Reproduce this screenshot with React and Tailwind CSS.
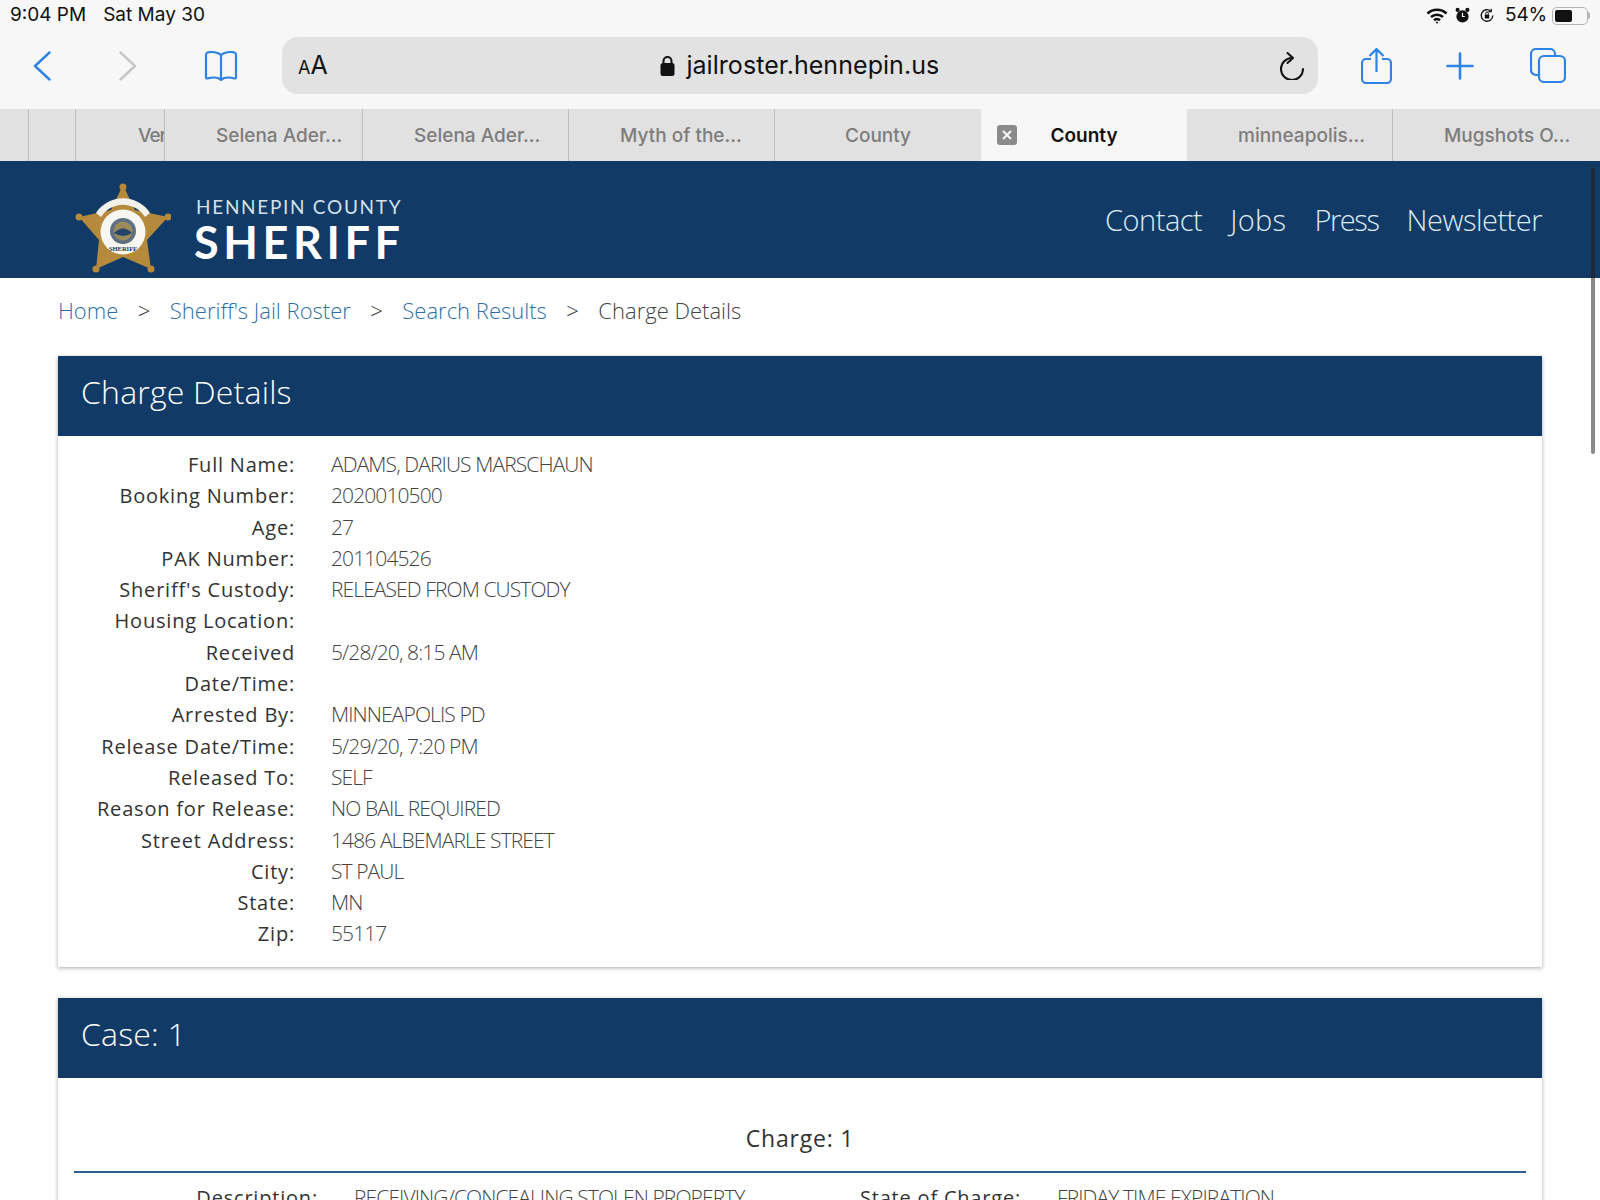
const tabs = [
  { label: 'Selena Ader...', w: 'w-[198px]', line: true },
  { label: 'Selena Ader...', w: 'w-[206px]', line: true },
  { label: 'Myth of the...', w: 'w-[206px]', line: true },
  { label: 'County', w: 'w-[206px]', center: true },
  { label: 'County', w: 'w-[206px]', center: true, active: true },
  { label: 'minneapolis...', w: 'w-[206px]', line: true },
  { label: 'Mugshots O...', w: 'flex-1' },
]

const details = [
  ['Full Name:', 'ADAMS, DARIUS MARSCHAUN'],
  ['Booking Number:', '2020010500'],
  ['Age:', '27'],
  ['PAK Number:', '201104526'],
  ["Sheriff's Custody:", 'RELEASED FROM CUSTODY'],
  ['Housing Location:', ''],
  ['Received\nDate/Time:', '5/28/20, 8:15 AM'],
  ['Arrested By:', 'MINNEAPOLIS PD'],
  ['Release Date/Time:', '5/29/20, 7:20 PM'],
  ['Released To:', 'SELF'],
  ['Reason for Release:', 'NO BAIL REQUIRED'],
  ['Street Address:', '1486 ALBEMARLE STREET'],
  ['City:', 'ST PAUL'],
  ['State:', 'MN'],
  ['Zip:', '55117'],
]

function Badge() {
  return (
    <svg width="96" height="96" viewBox="0 0 96 96" className="shrink-0">
      <path d="M48 5 60 30 93 37 72 60 76 89 48 77 21 89 24 60 4 37 36 30Z" fill="#b58a3c" />
      <circle cx="48" cy="7" r="3.5" fill="#b58a3c" />
      <circle cx="93" cy="37" r="3.5" fill="#b58a3c" />
      <circle cx="76" cy="89" r="3.500" fill="#b58a3c" />
      <circle cx="21" cy="89" r="3.500" fill="#b58a3c" />
      <circle cx="4" cy="37" r="3.500" fill="#b58a3c" />
      <path d="M21 33 A32 32 0 0 1 75 33 L70 37 A26 26 0 0 0 26 37Z" fill="#f3f1ea" />
      <circle cx="48" cy="52" r="22.500" fill="#f7f6f1" />
      <circle cx="48" cy="51" r="13" fill="#5d6f80" />
      <circle cx="48" cy="51" r="9.500" fill="#9a8a5c" />
      <path d="M39 53 Q48 44 57 53 Q48 59 39 53Z" fill="#23456b" />
      <text x="48" y="71" textAnchor="middle" fontSize="6.500" fontWeight="800" fill="#1d3557" fontFamily="'Liberation Serif', serif">SHERIFF</text>
    </svg>
  )
}

function StatusIcons() {
  return (
    <div className="flex items-center">
      {/* wifi */}
      <svg width="22" height="16" viewBox="0 0 22 16" fill="none" stroke="#111" strokeWidth="2.6">
        <path d="M1.5 5.5a14 14 0 0 1 19 0" />
        <path d="M5 9a9 9 0 0 1 12 0" />
        <path d="M8 12.2a4.4 4.4 0 0 1 6 0" />
        <circle cx="11" cy="14.5" r="1" fill="#111" stroke="none" />
      </svg>
      {/* alarm */}
      <svg className="ml-[7px]" width="15" height="17" viewBox="0 0 16 18">
        <circle cx="8" cy="10" r="6.5" fill="#111" />
        <circle cx="2.8" cy="3" r="2.2" fill="#111" />
        <circle cx="13.2" cy="3" r="2.2" fill="#111" />
        <path d="M8 6v4h2.5" stroke="#fff" strokeWidth="1.2" fill="none" />
      </svg>
      {/* rotation lock */}
      <svg className="ml-[9px]" width="16" height="17" viewBox="0 0 18 18" fill="none" stroke="#111" strokeWidth="1.5">
        <path d="M15.5 9a6.5 6.5 0 1 1-2-4.7" />
        <path d="M13.8 1.5v3.2h-3.2" strokeWidth="1.3" />
        <rect x="6.5" y="8" width="5" height="4.5" rx="0.8" fill="#111" stroke="none" />
        <path d="M7.5 8V6.5a1.5 1.5 0 0 1 3 0V8" strokeWidth="1.1" />
      </svg>
    </div>
  )
}

function Battery() {
  return (
    <div className="flex items-center">
      <div className="w-[36px] h-[18px] rounded-[5px] border border-[#b5b5b5] p-[2px]">
        <div className="w-[17px] h-full rounded-[2px] bg-[#111]" />
      </div>
      <div className="w-[2px] h-[7px] rounded-r bg-[#b5b5b5]" />
    </div>
  )
}

function SectionHead({ title }) {
  return (
    <div className="h-[80px] bg-[#113a66] pl-[23px] pt-[16px] text-[32px] leading-[40px] font-light text-white tracking-[0.2px]">
      {title}
    </div>
  )
}

export default function App() {
  return (
    <div className="relative w-[1600px] h-[1200px] overflow-hidden bg-white font-['Open_Sans',sans-serif]">
      {/* Status bar */}
      <div className="h-[30px] pt-[1px] bg-[#f7f7f7] flex items-center justify-between pl-[10px] pr-[10px] font-['Inter',sans-serif] text-[19px] text-[#111]">
        <div className="flex gap-[17px]">
          <span>9:04 PM</span>
          <span>Sat May 30</span>
        </div>
        <div className="flex items-center">
          <StatusIcons />
          <span className="ml-[10px] tracking-[-0.2px]">54%</span>
          <span className="ml-[5px]">
            <Battery />
          </span>
        </div>
      </div>

      {/* Safari toolbar */}
      <div className="h-[79px] pb-[8px] bg-[#f7f7f7] flex items-center">
        <svg className="ml-[33px]" width="18" height="30" viewBox="0 0 18 30" fill="none" stroke="#2f83e4" strokeWidth="2.4" strokeLinecap="round" strokeLinejoin="round">
          <path d="M16.5 1.5 2 15l14.5 13.5" />
        </svg>
        <svg className="ml-[68px]" width="18" height="30" viewBox="0 0 18 30" fill="none" stroke="#c6c6c6" strokeWidth="2.4" strokeLinecap="round" strokeLinejoin="round">
          <path d="M1.5 1.5 16 15 1.5 28.5" />
        </svg>
        <svg className="ml-[67px]" width="34" height="30" viewBox="0 0 34 30" fill="none" stroke="#2f83e4" strokeWidth="2.2" strokeLinejoin="round">
          <path d="M17 4C14 1 7 0.5 3.5 1.5 2 2 2 3 2 4v22c0 1 .5 1.5 1.500 1.500C8 26 14 26 17 29c3-3 9-3 13.500-1.500 1 0 1.500-.5 1.500-1.500V4c0-1 0-2-1.500-2.500C27 .5 20 1 17 4Z" />
          <path d="M17 4v25" />
        </svg>
        <div className="ml-[44px] w-[1036px] h-[57px] rounded-[16px] bg-[#e2e2e2] flex items-center">
          <span className="ml-[16px] pt-[1px] font-['Inter',sans-serif] text-[#111] flex items-baseline">
            <span className="text-[18px]">A</span>
            <span className="text-[25px]">A</span>
          </span>
          <div className="flex-1 flex items-center justify-center gap-[11px] pt-[1px] font-['Inter',sans-serif] text-[25px] tracking-[0.05px] text-[#111] pr-[7px]">
            <svg width="15" height="22" viewBox="0 0 15 22">
              <rect x="0.5" y="8" width="14" height="13" rx="2.5" fill="#111" />
              <path d="M3.5 9V6a4 4 0 0 1 8 0v3" fill="none" stroke="#111" strokeWidth="2" />
            </svg>
            <span>jailroster.hennepin.us</span>
          </div>
          <svg className="mr-[13px]" width="26" height="28" viewBox="0 0 26 28" fill="none" stroke="#111" strokeWidth="2" strokeLinecap="round" strokeLinejoin="round">
            <path d="M13 6A11 11 0 1 0 24 17" />
            <path d="M8.500 1 14 6l-5.500 5" />
          </svg>
        </div>
        <svg className="ml-[43px]" width="31" height="37" viewBox="0 0 31 37" fill="none" stroke="#2f83e4" strokeWidth="2.2" strokeLinejoin="round">
          <path d="M10 12H5a4 4 0 0 0-4 4v16a4 4 0 0 0 4 4h21a4 4 0 0 0 4-4V16a4 4 0 0 0-4-4h-5" />
          <path d="M15.500 25V2M8.500 9l7-7 7 7" />
        </svg>
        <svg className="ml-[54px]" width="28" height="28" viewBox="0 0 28 28" stroke="#2f83e4" strokeWidth="2.6" strokeLinecap="round">
          <path d="M14 1.500v25M1.500 14h25" />
        </svg>
        <svg className="ml-[56px]" width="36" height="35" viewBox="0 0 36 35" fill="none" stroke="#2f83e4" strokeWidth="2.2">
          <path d="M8 27H6a5 5 0 0 1-5-5V6a5 5 0 0 1 5-5h14a5 5 0 0 1 5 5v2" />
          <rect x="9" y="8" width="26" height="26" rx="5" />
        </svg>
      </div>

      {/* Tab bar */}
      <div className="h-[52px] bg-[#e1e1e1] flex font-['Inter',sans-serif] text-[19px] font-medium text-[#7d7d7d]">
        <div className="w-[29px] border-r border-[#bdbdbd]" />
        <div className="w-[47px] border-r border-[#bdbdbd]" />
        <div className="w-[89px] border-r border-[#bdbdbd] overflow-hidden flex items-center pl-[62px] pt-[3px] whitespace-nowrap tracking-[-1px]">Verified</div>
        {tabs.map((tab, i) => (
          <div
            key={i}
            className={`${tab.w} relative flex items-center pt-[3px] ${tab.center ? 'justify-center' : 'pl-[51px]'} ${
              tab.active ? 'bg-[#f7f7f7] text-[#111] font-semibold' : ''
            } ${tab.line ? 'border-r border-[#bdbdbd]' : ''}`}
          >
            {tab.active && (
              <span className="absolute left-[16px] top-[16px] w-[20px] h-[20px] rounded-[3px] bg-[#8b8b8b] flex items-center justify-center">
                <svg width="12" height="12" viewBox="0 0 12 12" stroke="#f7f7f7" strokeWidth="2">
                  <path d="M2 2l8 8M10 2l-8 8" />
                </svg>
              </span>
            )}
            {tab.label}
          </div>
        ))}
      </div>

      {/* Site header */}
      <header className="h-[117px] bg-[#113a66] flex items-center justify-between pl-[75px] pr-[58px] text-white">
        <div className="flex items-start self-start pt-[19px]">
          <Badge />
          <div className="ml-[23px] mt-[15px] flex flex-col items-start font-['Lato',sans-serif]">
            <span className="pl-[2px] text-[19px] leading-[24px] tracking-[1.7px] text-[#d5e0ea]">HENNEPIN COUNTY</span>
            <span className="text-[45px] leading-[46px] font-bold tracking-[4.6px]">SHERIFF</span>
          </div>
        </div>
        <nav className="flex gap-[28px] text-[29px] font-light tracking-[-0.5px] text-[#dfeaf3]">
          <a>Contact</a>
          <a className="tracking-[0.3px]">Jobs</a>
          <a className="tracking-[-1.4px]">Press</a>
          <a>Newsletter</a>
        </nav>
      </header>

      {/* Breadcrumb */}
      <div className="h-[78px] pl-[58px] pt-[14px] flex gap-[19.500px] text-[22px] leading-[36px] font-light text-[#2f6fa5]">
        <a>Home</a>
        <span className="text-[#444]">&gt;</span>
        <a>Sheriff's Jail Roster</a>
        <span className="text-[#444]">&gt;</span>
        <a>Search Results</a>
        <span className="text-[#444]">&gt;</span>
        <span className="text-[#444]">Charge Details</span>
      </div>

      {/* Details card */}
      <section className="mx-[58px] shadow-[0_1px_4px_rgba(0,0,0,0.35)]">
        <SectionHead title="Charge Details" />
        <div className="pt-[13px] pb-[17px]">
          {details.map(([label, value]) => (
            <div key={label} className="grid grid-cols-[237px_1fr] gap-x-[36px] text-[20px] leading-[31.3px]">
              <div className="text-right whitespace-pre tracking-[0.8px] text-[#333]">{label}</div>
              <div className="text-[21px] font-light tracking-[-0.9px] text-[#444]">{value}</div>
            </div>
          ))}
        </div>
      </section>

      {/* Case card */}
      <section className="mx-[58px] mt-[31px] shadow-[0_1px_4px_rgba(0,0,0,0.35)]">
        <SectionHead title="Case: 1" />
        <div className="px-[16px]">
          <div className="h-[95px] border-b-2 border-[#2b5f8f] pt-[42px] text-center text-[23px] leading-[36px] text-[#333] tracking-[0.8px]">
            Charge: 1
          </div>
          <div className="flex pt-[9px] text-[20px] leading-[31px]">
            <div className="w-[244px] text-right tracking-[0.8px] text-[#333]">Description:</div>
            <div className="w-[500px] ml-[36px] text-[21px] font-light tracking-[-0.9px] text-[#444]">RECEIVING/CONCEALING STOLEN PROPERTY</div>
            <div className="w-[167px] text-right tracking-[0.8px] text-[#333] whitespace-nowrap">State of Charge:</div>
            <div className="ml-[36px] text-[21px] font-light tracking-[-0.9px] text-[#444]">FRIDAY TIME EXPIRATION</div>
          </div>
        </div>
      </section>

      {/* Scroll indicator */}
      <div className="absolute right-[5px] top-[167px] w-[4px] h-[287px] rounded-full bg-[#8a8a8a] overflow-hidden">
        <div className="h-[111px] bg-[#1c2a38]" />
      </div>
    </div>
  )
}
